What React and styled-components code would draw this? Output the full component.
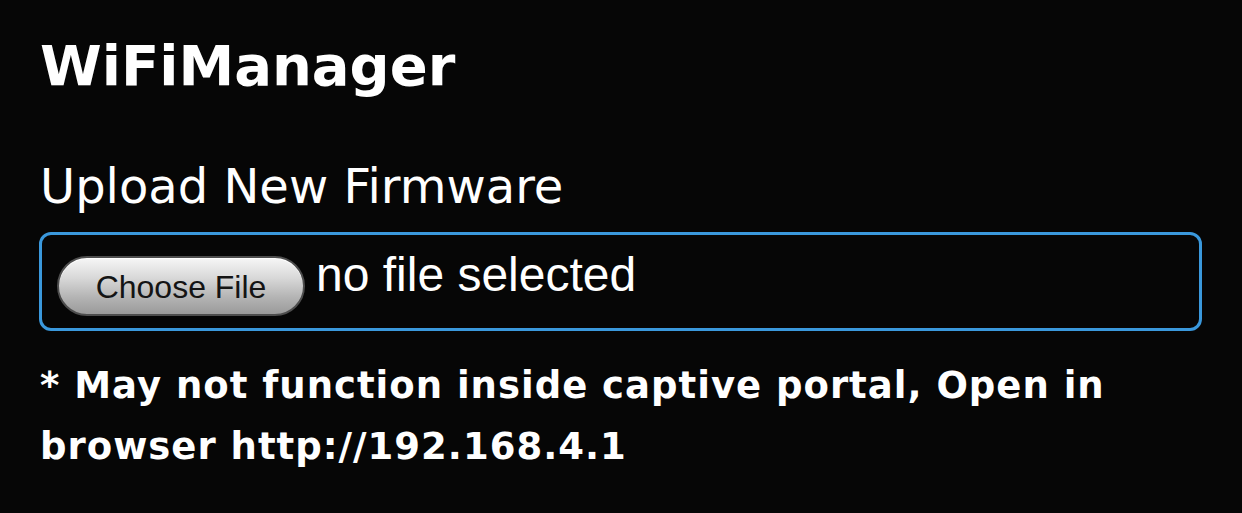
import React from "react";
import styled, { createGlobalStyle } from "styled-components";

const GlobalStyle = createGlobalStyle`
  html, body {
    margin: 0;
    padding: 0;
    background: #060606;
  }
  body {
    font-family: "DejaVu Sans", Verdana, sans-serif;
    color: #ffffff;
  }
`;

const Page = styled.div`
  box-sizing: border-box;
  width: 1242px;
  min-height: 513px;
  padding: 32px 40px 0 40px;
  background: #060606;
`;

const Title = styled.h1`
  margin: 0;
  font-family: "DejaVu Sans", Verdana, sans-serif;
  font-weight: 700;
  font-size: 56px;
  line-height: 68px;
  color: #ffffff;
`;

const SectionTitle = styled.h3`
  margin: 58px 0 0 0;
  font-family: "DejaVu Sans", Verdana, sans-serif;
  font-weight: 400;
  font-size: 48px;
  line-height: 56px;
  color: #ffffff;
`;

const FileBox = styled.label`
  box-sizing: border-box;
  margin-top: 18px;
  display: flex;
  align-items: flex-start;
  gap: 11px;
  width: 1163px;
  margin-left: -1px;
  height: 99px;
  padding: 16px 15px 12px 15px;
  border: 3px solid #3a98dc;
  border-radius: 12px;
`;

const ChooseButton = styled.span`
  box-sizing: border-box;
  margin-top: 5px;
  display: flex;
  align-items: center;
  justify-content: center;
  width: 248px;
  height: 60px;
  padding-top: 2px;
  border: 2px solid #4d4d4d;
  border-radius: 30px;
  background: linear-gradient(#f6f6f6 0%, #d9d9d9 35%, #b4b4b4 70%, #9a9a9a 100%);
  box-shadow: inset 0 1px 0 rgba(255, 255, 255, 0.8);
  font-family: "Liberation Sans", Arial, sans-serif;
  font-size: 32px;
  color: #141414;
`;

const FileName = styled.span`
  font-family: "Liberation Sans", Arial, sans-serif;
  font-size: 48px;
  line-height: 48px;
  color: #ffffff;
`;

const Note = styled.p`
  margin: 24px 0 0 0;
  font-family: "DejaVu Sans", Verdana, sans-serif;
  font-weight: 700;
  font-size: 37px;
  letter-spacing: 1px;
  line-height: 61px;
  color: #ffffff;
`;

export default function App() {
  return (
    <>
      <GlobalStyle />
      <Page>
        <Title>WiFiManager</Title>
        <SectionTitle>Upload New Firmware</SectionTitle>
        <FileBox>
          <ChooseButton>Choose File</ChooseButton>
          <FileName>no file selected</FileName>
        </FileBox>
        <Note>
          * May not function inside captive portal, Open in browser http://192.168.4.1
        </Note>
      </Page>
    </>
  );
}
